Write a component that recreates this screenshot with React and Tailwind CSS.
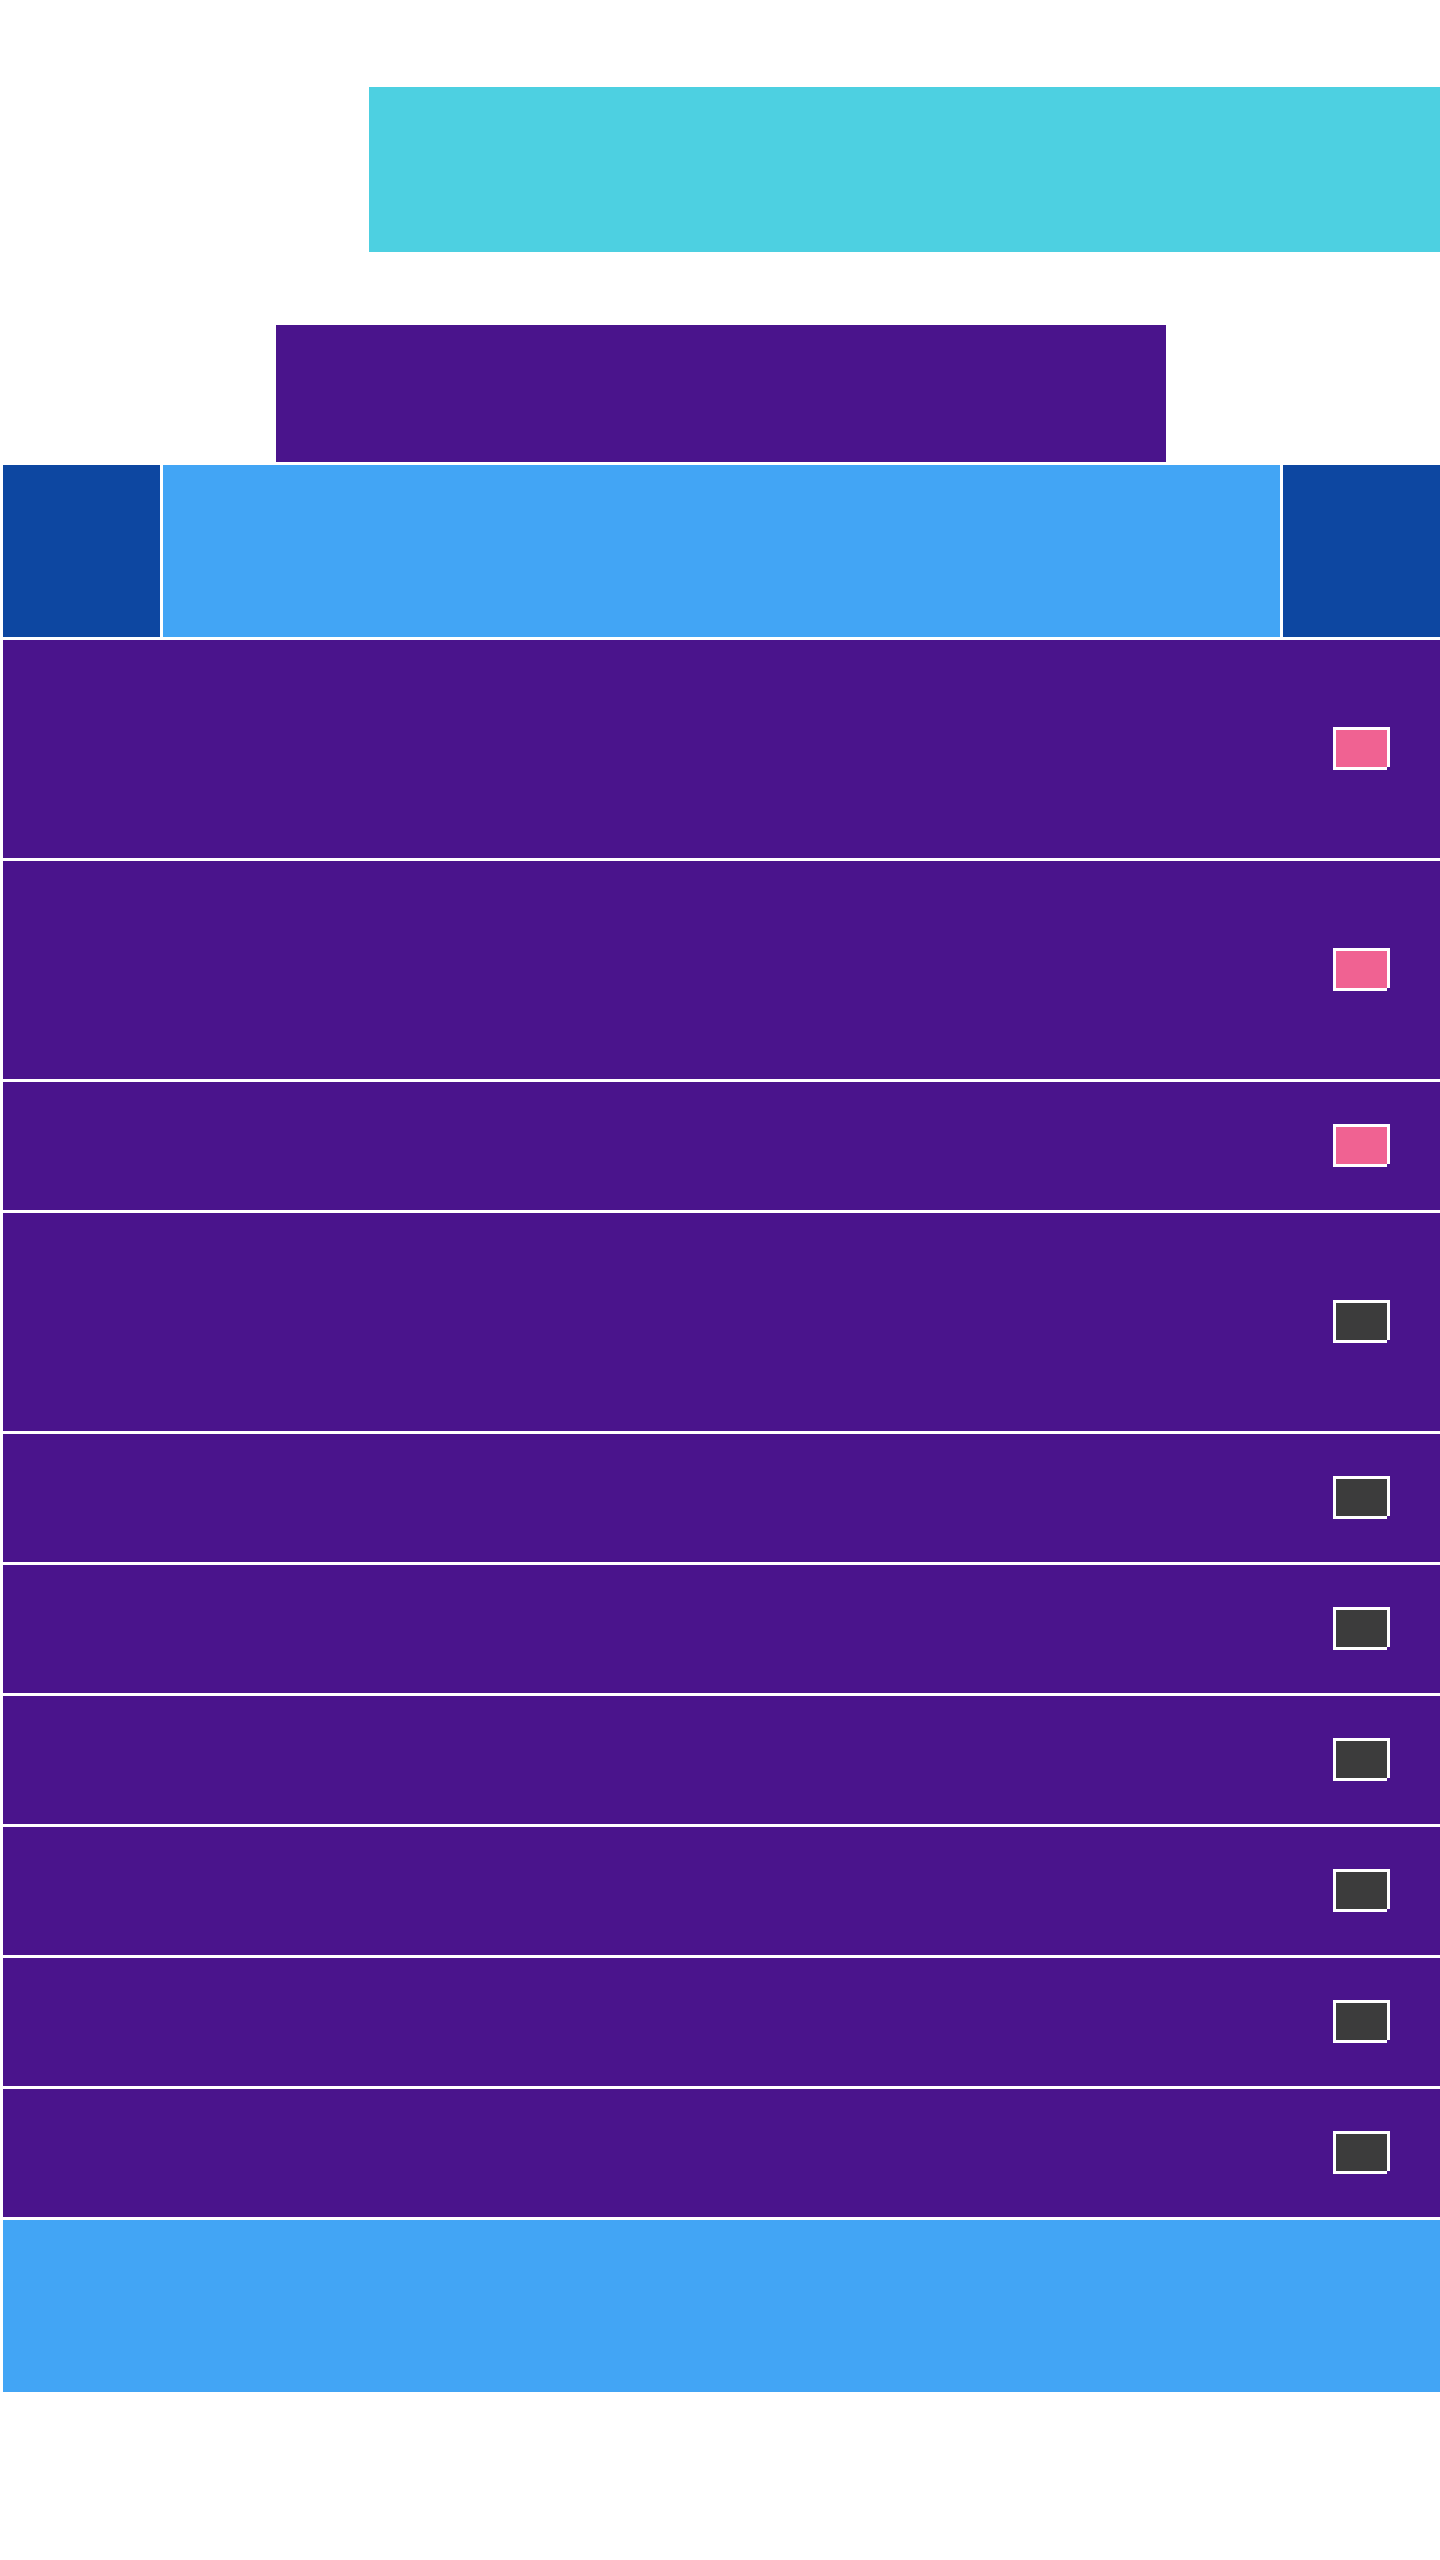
const rows = [
  { h: 'h-[218px]', on: true },
  { h: 'h-[218px]', on: true },
  { h: 'h-[128px]', on: true },
  { h: 'h-[218px]', on: false },
  { h: 'h-[128px]', on: false },
  { h: 'h-[128px]', on: false },
  { h: 'h-[128px]', on: false },
  { h: 'h-[128px]', on: false },
  { h: 'h-[128px]', on: false },
  { h: 'h-[128px]', on: false },
]

function Toggle({ on }) {
  return (
    <div
      className={
        on
          ? 'w-[54px] h-[40px] mb-[4px] border-t-[3px] border-l-[3px] border-white bg-[#f06292] shadow-[3px_0_0_#fff,0_3px_0_#fff]'
          : 'w-[54px] h-[40px] mb-[4px] border-t-[3px] border-l-[3px] border-white bg-[#3c3c3c] shadow-[3px_0_0_#fff,0_3px_0_#fff]'
      }
    />
  )
}

export default function App() {
  return (
    <div className="min-h-[2560px] bg-white flex flex-col" style={{ fontFamily: 'Roboto, sans-serif' }}>
      <div className="mt-[87px] ml-[369px] h-[165px] bg-[#4dd0e1]" />

      <div className="mt-[73px] ml-[276px] w-[890px] h-[137px] bg-[#4a148c]" />

      <div className="flex flex-col gap-[3px] pl-[3px] py-[3px]">
        <div className="flex gap-[3px] h-[172px]">
          <div className="w-[157px] bg-[#0d47a1]" />
          <div className="w-[1117px] bg-[#42a5f5]" />
          <div className="flex-1 bg-[#0d47a1]" />
        </div>

        {rows.map((r, i) => (
          <div key={i} className={`${r.h} bg-[#4a148c] flex items-center justify-end pr-[53px]`}>
            <Toggle on={r.on} />
          </div>
        ))}

        <div className="h-[172px] bg-[#42a5f5]" />
      </div>
    </div>
  )
}
